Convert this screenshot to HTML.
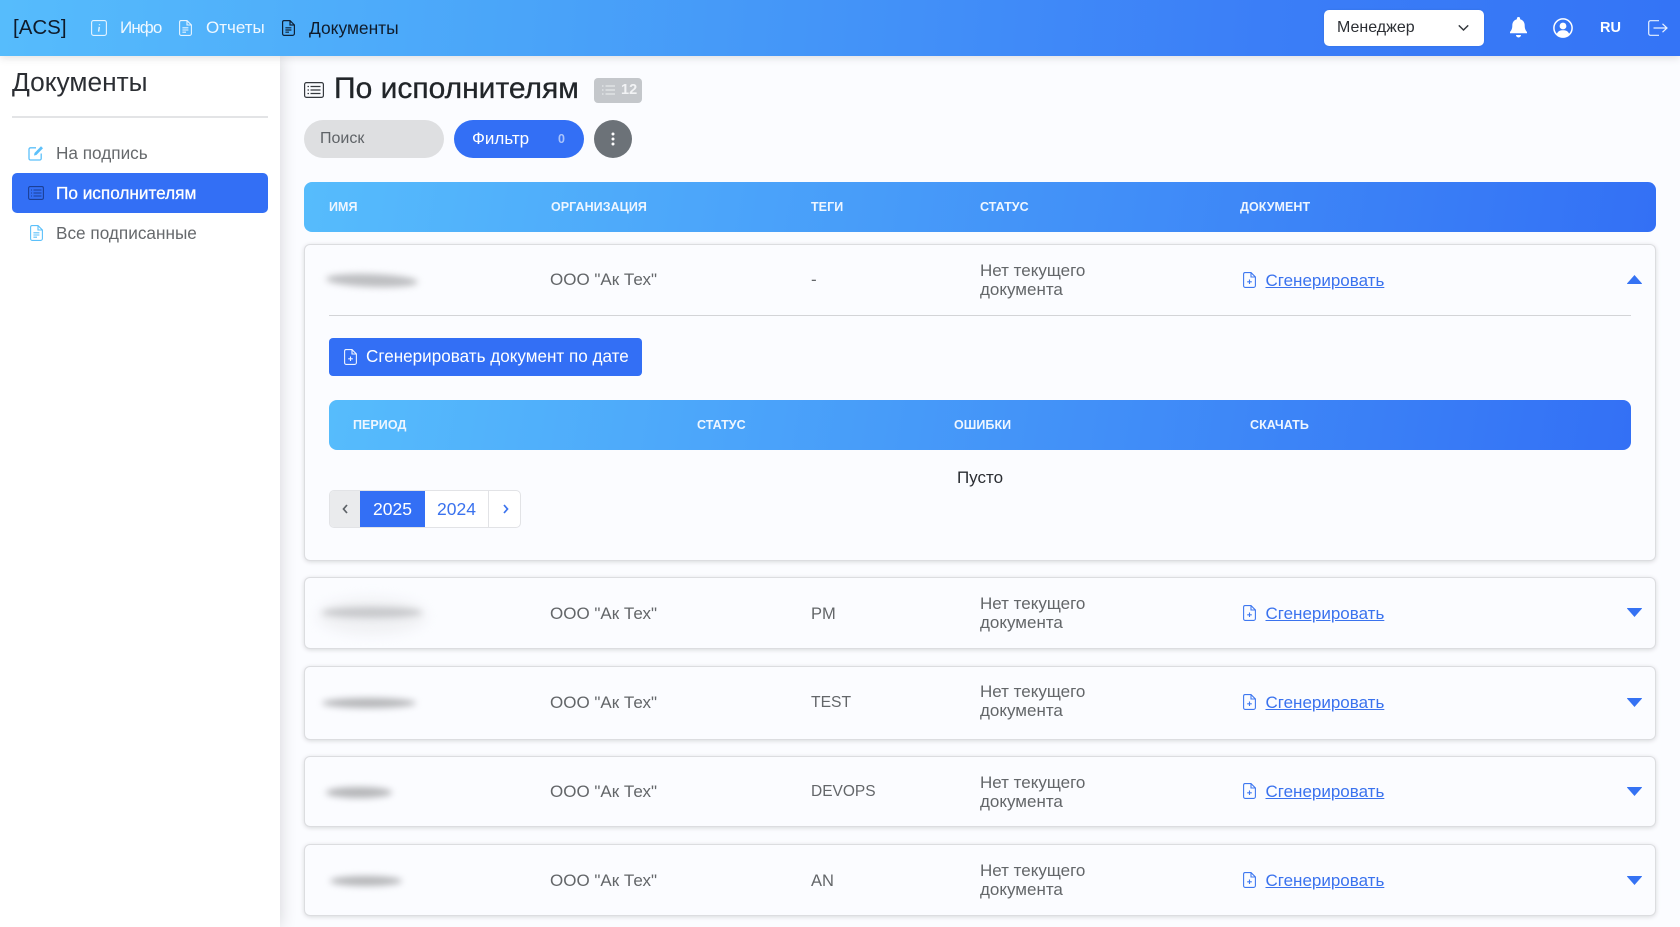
<!DOCTYPE html>
<html lang="ru"><head><meta charset="utf-8"><title>Документы</title>
<style>
*{box-sizing:border-box}
html,body{margin:0;padding:0;width:1680px;height:927px;overflow:hidden;background:#fbfcff;font-family:"Liberation Sans",sans-serif;color:#212529}
.a{position:absolute;white-space:nowrap}
.t{line-height:20px;font-size:17px;color:#636669}
.hdr{position:absolute;left:0;top:0;width:1680px;height:56px;background:linear-gradient(95deg,#56bcfc 0%,#4aa5f9 30%,#3b7ef7 75%,#3474f6 100%);box-shadow:0 2px 8px rgba(0,0,0,.12);z-index:3}
.side{position:absolute;left:0;top:56px;width:280px;height:871px;background:#fff;box-shadow:0 0 16px rgba(0,0,0,.16);z-index:2}
.grad{position:absolute;background:linear-gradient(100deg,#56bcfc 0%,#3370f5 100%);border-radius:8px}
.th{position:absolute;font-size:12.5px;font-weight:bold;color:#eef6ff;letter-spacing:.05px;white-space:nowrap;line-height:16px}
.card{position:absolute;left:304px;width:1352px;background:#fbfcff;border:1px solid #dcdde0;border-radius:6px;box-shadow:0 1px 5px rgba(0,0,0,.14)}
.link{color:#3a72ee;text-decoration:underline;font-size:17px;line-height:20px}
.blur{position:absolute;background:#b5b6b9;filter:blur(3.5px);border-radius:50%}
svg{position:absolute;overflow:visible}
</style></head><body>

<div class="side"></div>
<div class="hdr"></div>

<div style="position:relative;z-index:4">
<div class="a" style="left:13px;top:16px;font-size:20.5px;line-height:24px;color:#0f1b2a">[ACS]</div>

<svg style="left:91px;top:20px" width="16" height="16" viewBox="0 0 16 16" fill="none" stroke="#e6f4ff" stroke-width="1.1"><rect x=".6" y=".6" width="14.8" height="14.8" rx="2"/><path d="M8.300 6.900 7.600 11.600M8.500 4.300v.9" stroke-width="1.400"/></svg>
<div class="a" style="left:120px;top:18px;font-size:17px;letter-spacing:-.9px;line-height:20px;color:#eff8ff">Инфо</div>
<svg style="left:179px;top:20px" width="13" height="16" viewBox="0 0 13 16" fill="none" stroke="#e6f4ff" stroke-width="1.100"><path d="M2 .6h6l4.400 4.400v8.600a1.800 1.800 0 0 1-1.800 1.800H2A1.600 1.600 0 0 1 .6 13.600V2A1.500 1.500 0 0 1 2 .6zM8 .6V5h4.400M3.400 7.800h6M3.400 10h6M3.400 12.200h3.600"/></svg>
<div class="a" style="left:206px;top:18px;font-size:17px;line-height:20px;color:#eff8ff">Отчеты</div>
<svg style="left:282px;top:20px" width="13" height="16" viewBox="0 0 13 16" fill="none" stroke="#0f2238" stroke-width="1.200"><path d="M2 .6h6l4.400 4.400v8.600a1.800 1.800 0 0 1-1.800 1.800H2A1.600 1.600 0 0 1 .6 13.600V2A1.500 1.500 0 0 1 2 .6zM8 .6V5h4.400M3.400 7.800h6M3.400 10h6M3.400 12.200h3.600"/></svg>
<div class="a" style="left:309px;top:18px;font-size:17.400px;line-height:20px;color:#0f1b2a">Документы</div>

<div class="a" style="left:1324px;top:10px;width:160px;height:36px;background:#fff;border-radius:5px;box-shadow:0 0 2px rgba(0,0,0,.1)"></div>
<div class="a" style="left:1337px;top:18px;font-size:16px;line-height:20px;color:#2b2e33">Менеджер</div>
<svg style="left:1458px;top:24px" width="11" height="8" viewBox="0 0 11 8" fill="none" stroke="#33373c" stroke-width="1.500"><path d="M.8 1.400 5.500 6l4.700-4.600"/></svg>

<svg style="left:1510px;top:17px" width="17" height="21" viewBox="0 0 17 21" fill="#fff"><path d="M8.500 0a1.600 1.600 0 0 1 1.600 1.600v.6c3 .7 4.600 3.300 4.600 6.300 0 3.300 1 5 2.300 6.500v1.200H0V15c1.300-1.500 2.300-3.200 2.300-6.500 0-3 1.600-5.600 4.600-6.300v-.6A1.600 1.600 0 0 1 8.500 0zM6 18h5a2.500 2.500 0 0 1-5 0z"/></svg>
<svg style="left:1553px;top:18px" width="20" height="20" viewBox="0 0 20 20" fill="none"><circle cx="10" cy="10" r="9.100" stroke="#fff" stroke-width="1.500"/><circle cx="10" cy="8" r="3.400" fill="#fff"/><path d="M3.800 16c1-3 3.500-3.800 6.200-3.800s5.200.8 6.200 3.800A9 9 0 0 1 10 19a9 9 0 0 1-6.200-3z" fill="#fff"/></svg>
<div class="a" style="left:1600px;top:18px;font-size:14.500px;font-weight:bold;line-height:20px;color:#fff">RU</div>
<svg style="left:1648px;top:20px" width="20" height="16" viewBox="0 0 20 16" fill="none" stroke="#e8f1ff" stroke-width="1.200"><path d="M11 .7H2.500A1.800 1.800 0 0 0 .7 2.500v11a1.800 1.800 0 0 0 1.800 1.800H11M5.500 8h13M14.500 3.800 19 8l-4.500 4.200"/></svg>

<div class="a" style="left:12px;top:67px;font-size:26.300px;line-height:30px;color:#2b2e33">Документы</div>
<div class="a" style="left:12px;top:116px;width:256px;height:2px;background:#e3e4e6"></div>

<svg style="left:28px;top:145px" width="16" height="16" viewBox="0 0 16 16" fill="none" stroke="#5cc0fa" stroke-width="1.300"><path d="M13.200 8.500v5A1.500 1.500 0 0 1 11.700 15H2.500A1.500 1.500 0 0 1 1 13.500V4.300A1.500 1.500 0 0 1 2.500 2.800h5.500"/><path d="M6 10.500l.5-2.500L13 1.300l2 2-6.600 6.700z" fill="#5cc0fa" stroke="none"/></svg>
<div class="a" style="left:56px;top:143px;font-size:17.200px;line-height:20px;color:#66696c">На подпись</div>

<div class="a" style="left:12px;top:173px;width:256px;height:40px;background:#336ff5;border-radius:5px"></div>
<svg style="left:28px;top:186px" width="16" height="14" viewBox="0 0 16 14" fill="none" stroke="#1b3f96" stroke-width="1.100"><rect x=".6" y=".6" width="14.800" height="12.800" rx="1.500"/><path d="M3 4h1M5.500 4h8M3 7h1M5.500 7h8M3 10h1M5.500 10h8"/></svg>
<div class="a" style="left:56px;top:183px;font-size:17.200px;line-height:20px;color:#fff;-webkit-text-stroke:.3px #fff">По исполнителям</div>

<svg style="left:30px;top:225px" width="13" height="16" viewBox="0 0 13 16" fill="none" stroke="#5cc0fa" stroke-width="1.100"><path d="M2 .6h6l4.400 4.400v8.600a1.800 1.800 0 0 1-1.800 1.800H2A1.600 1.600 0 0 1 .6 13.600V2A1.500 1.500 0 0 1 2 .6zM8 .6V5h4.400M3.400 7.800h6M3.400 10h6M3.400 12.200h3.600"/></svg>
<div class="a" style="left:56px;top:223px;font-size:17.200px;line-height:20px;color:#66696c">Все подписанные</div>

<svg style="left:304px;top:82px" width="20" height="16" viewBox="0 0 20 16" fill="none" stroke="#35393e" stroke-width="1.200"><rect x=".6" y=".6" width="18.800" height="14.800" rx="1.800"/><path d="M3.500 4.500h1.500M6.500 4.500h10M3.500 8h1.500M6.500 8h10M3.500 11.500h1.500M6.500 11.500h10"/></svg>
<div class="a" style="left:334px;top:71px;font-size:30px;line-height:36px;color:#212529;-webkit-text-stroke:.3px #212529">По исполнителям</div>
<div class="a" style="left:594px;top:78px;width:48px;height:25px;background:#c4c7cb;border-radius:4px"></div>
<svg style="left:602px;top:85px" width="13" height="10" viewBox="0 0 13 10" fill="none" stroke="#eef0f2" stroke-width="1.100"><path d="M0 1h1.500M3.500 1H13M0 5h1.500M3.500 5H13M0 9h1.500M3.500 9H13"/></svg>
<div class="a" style="left:621px;top:80px;font-size:14.500px;font-weight:bold;line-height:20px;color:#f2f3f5">12</div>

<div class="a" style="left:304px;top:120px;width:140px;height:38px;background:#dedfe1;border-radius:19px"></div>
<div class="a" style="left:320px;top:129px;font-size:16px;line-height:20px;color:#5f6367">Поиск</div>
<div class="a" style="left:454px;top:120px;width:130px;height:38px;background:#336ff5;border-radius:19px"></div>
<div class="a" style="left:472px;top:129px;font-size:17px;line-height:20px;color:#fff">Фильтр</div>
<div class="a" style="left:558px;top:129px;font-size:12.500px;font-weight:bold;line-height:20px;color:#a9c3fb">0</div>
<div class="a" style="left:594px;top:120px;width:38px;height:38px;background:#6c7278;border-radius:50%"></div>
<svg style="left:611px;top:132px" width="4" height="14" viewBox="0 0 4 14" fill="#fff"><circle cx="2" cy="2" r="1.500"/><circle cx="2" cy="7" r="1.500"/><circle cx="2" cy="12" r="1.500"/></svg>

<div class="grad" style="left:304px;top:182px;width:1352px;height:50px"></div>
<div class="th" style="left:329px;top:199px">ИМЯ</div>
<div class="th" style="left:551px;top:199px">ОРГАНИЗАЦИЯ</div>
<div class="th" style="left:811px;top:199px">ТЕГИ</div>
<div class="th" style="left:980px;top:199px">СТАТУС</div>
<div class="th" style="left:1240px;top:199px">ДОКУМЕНТ</div>

<div class="card" style="top:244px;height:317px"></div>
<div class="card" style="top:577px;height:72px"></div>
<div class="card" style="top:666px;height:74px"></div>
<div class="card" style="top:756px;height:71px"></div>
<div class="card" style="top:844px;height:72px"></div>

<div class="blur" style="left:326px;top:274px;width:92px;height:13px;transform:rotate(2deg);background:#bdbec1"></div>
<div class="blur" style="left:318px;top:598px;width:108px;height:36px;background:#eff0f3;filter:blur(6px)"></div>
<div class="blur" style="left:322px;top:607px;width:100px;height:11px;background:#c8c9cc"></div>
<div class="blur" style="left:322px;top:698px;width:94px;height:10px"></div>
<div class="blur" style="left:326px;top:787px;width:66px;height:11px"></div>
<div class="blur" style="left:330px;top:876px;width:72px;height:10px"></div>

<div class="a t" style="left:550px;top:270px">ООО "Ак Тех"</div>
<div class="a t" style="left:811px;top:270px">-</div>
<div class="a t" style="left:980px;top:261px">Нет текущего</div>
<div class="a t" style="left:980px;top:280px">документа</div>
<svg style="left:1243px;top:272px" width="13" height="16" viewBox="0 0 13 16" fill="none" stroke="#3f78f0" stroke-width="1.100"><path d="M2 .6h6l4.400 4.400v8.600a1.800 1.800 0 0 1-1.800 1.800H2A1.600 1.600 0 0 1 .6 13.600V2A1.500 1.500 0 0 1 2 .6zM8 .6V5h4.400M6.500 7.500v4.500M4.200 9.800h4.600"/></svg>
<div class="a link" style="left:1265.500px;top:271px">Сгенерировать</div>
<svg style="left:1627px;top:275px" width="15" height="9" viewBox="0 0 15 9" fill="#3572f3"><path d="M7.500 0 15 8.500a.5.500 0 0 1-.4.500H.4a.5.500 0 0 1-.4-.500z"/></svg>
<div class="a" style="left:329px;top:315px;width:1302px;height:1px;background:#d3d4d7"></div>

<div class="a" style="left:329px;top:338px;width:313px;height:38px;background:#336ff5;border-radius:4px"></div>
<svg style="left:344px;top:349px" width="13" height="16" viewBox="0 0 13 16" fill="none" stroke="#eef3ff" stroke-width="1.100"><path d="M2 .6h6l4.400 4.400v8.600a1.800 1.800 0 0 1-1.800 1.800H2A1.600 1.600 0 0 1 .6 13.600V2A1.500 1.500 0 0 1 2 .6zM8 .6V5h4.400M6.500 7.500v4.500M4.200 9.800h4.600"/></svg>
<div class="a" style="left:366px;top:347px;font-size:17.100px;line-height:20px;color:#fff">Сгенерировать документ по дате</div>

<div class="grad" style="left:329px;top:400px;width:1302px;height:50px"></div>
<div class="th" style="left:353px;top:417px">ПЕРИОД</div>
<div class="th" style="left:697px;top:417px">СТАТУС</div>
<div class="th" style="left:954px;top:417px">ОШИБКИ</div>
<div class="th" style="left:1250px;top:417px">СКАЧАТЬ</div>
<div class="a" style="left:329px;top:468px;width:1302px;text-align:center;font-size:17px;line-height:20px;color:#2b2e33">Пусто</div>

<div class="a" style="left:329px;top:490px;width:192px;height:38px;background:#fff;border:1px solid #e2e3e6;border-radius:5px;overflow:hidden">
<div class="a" style="left:0;top:0;width:30px;height:36px;background:#eaebed"></div>
<div class="a" style="left:30px;top:-1px;width:65px;height:38px;background:#336ff5;color:#fff;font-size:17.500px;line-height:38px;text-align:center">2025</div>
<div class="a" style="left:95px;top:0;width:64px;height:36px;color:#3a72ee;font-size:17.500px;line-height:36px;text-align:center;border-right:1px solid #e2e3e6">2024</div>
</div>
<svg style="left:342px;top:504px" width="6" height="10" viewBox="0 0 6 10" fill="none" stroke="#5d6267" stroke-width="1.700"><path d="M5 1 1.500 5 5 9"/></svg>
<svg style="left:503px;top:504px" width="6" height="10" viewBox="0 0 6 10" fill="none" stroke="#3a72ee" stroke-width="1.700"><path d="M1 1l3.500 4L1 9"/></svg>

<div class="a t" style="left:550px;top:604px">ООО "Ак Тех"</div>
<div class="a t" style="left:811px;top:604px;font-size:16.500px">PM</div>
<div class="a t" style="left:980px;top:594px">Нет текущего</div>
<div class="a t" style="left:980px;top:613px">документа</div>
<svg style="left:1243px;top:605px" width="13" height="16" viewBox="0 0 13 16" fill="none" stroke="#3f78f0" stroke-width="1.100"><path d="M2 .6h6l4.400 4.400v8.600a1.800 1.800 0 0 1-1.800 1.800H2A1.600 1.600 0 0 1 .6 13.600V2A1.500 1.500 0 0 1 2 .6zM8 .6V5h4.400M6.500 7.500v4.500M4.200 9.800h4.600"/></svg>
<div class="a link" style="left:1265.500px;top:604px">Сгенерировать</div>
<svg style="left:1627px;top:608px" width="15" height="9" viewBox="0 0 15 9" fill="#3572f3"><path d="M7.500 9 15 .5a.5.500 0 0 0-.4-.500H.4a.5.500 0 0 0-.4.500z"/></svg>

<div class="a t" style="left:550px;top:693px">ООО "Ак Тех"</div>
<div class="a t" style="left:811px;top:693px;font-size:15.700px">TEST</div>
<div class="a t" style="left:980px;top:682px">Нет текущего</div>
<div class="a t" style="left:980px;top:701px">документа</div>
<svg style="left:1243px;top:694px" width="13" height="16" viewBox="0 0 13 16" fill="none" stroke="#3f78f0" stroke-width="1.100"><path d="M2 .6h6l4.400 4.400v8.600a1.800 1.800 0 0 1-1.800 1.800H2A1.600 1.600 0 0 1 .6 13.600V2A1.500 1.500 0 0 1 2 .6zM8 .6V5h4.400M6.500 7.500v4.500M4.200 9.800h4.600"/></svg>
<div class="a link" style="left:1265.500px;top:693px">Сгенерировать</div>
<svg style="left:1627px;top:698px" width="15" height="9" viewBox="0 0 15 9" fill="#3572f3"><path d="M7.500 9 15 .5a.5.500 0 0 0-.4-.500H.4a.5.500 0 0 0-.4.500z"/></svg>

<div class="a t" style="left:550px;top:782px">ООО "Ак Тех"</div>
<div class="a t" style="left:811px;top:782px;font-size:15.500px">DEVOPS</div>
<div class="a t" style="left:980px;top:773px">Нет текущего</div>
<div class="a t" style="left:980px;top:792px">документа</div>
<svg style="left:1243px;top:783px" width="13" height="16" viewBox="0 0 13 16" fill="none" stroke="#3f78f0" stroke-width="1.100"><path d="M2 .6h6l4.400 4.400v8.600a1.800 1.800 0 0 1-1.800 1.800H2A1.600 1.600 0 0 1 .6 13.600V2A1.500 1.500 0 0 1 2 .6zM8 .6V5h4.400M6.500 7.500v4.500M4.200 9.800h4.600"/></svg>
<div class="a link" style="left:1265.500px;top:782px">Сгенерировать</div>
<svg style="left:1627px;top:787px" width="15" height="9" viewBox="0 0 15 9" fill="#3572f3"><path d="M7.500 9 15 .5a.5.500 0 0 0-.4-.500H.4a.5.500 0 0 0-.4.500z"/></svg>

<div class="a t" style="left:550px;top:871px">ООО "Ак Тех"</div>
<div class="a t" style="left:811px;top:871px;font-size:16.500px">AN</div>
<div class="a t" style="left:980px;top:861px">Нет текущего</div>
<div class="a t" style="left:980px;top:880px">документа</div>
<svg style="left:1243px;top:872px" width="13" height="16" viewBox="0 0 13 16" fill="none" stroke="#3f78f0" stroke-width="1.100"><path d="M2 .6h6l4.400 4.400v8.600a1.800 1.800 0 0 1-1.800 1.800H2A1.600 1.600 0 0 1 .6 13.600V2A1.500 1.500 0 0 1 2 .6zM8 .6V5h4.400M6.500 7.500v4.500M4.200 9.800h4.600"/></svg>
<div class="a link" style="left:1265.500px;top:871px">Сгенерировать</div>
<svg style="left:1627px;top:876px" width="15" height="9" viewBox="0 0 15 9" fill="#3572f3"><path d="M7.500 9 15 .5a.5.500 0 0 0-.4-.500H.4a.5.500 0 0 0-.4.500z"/></svg>
</div>
</body></html>
